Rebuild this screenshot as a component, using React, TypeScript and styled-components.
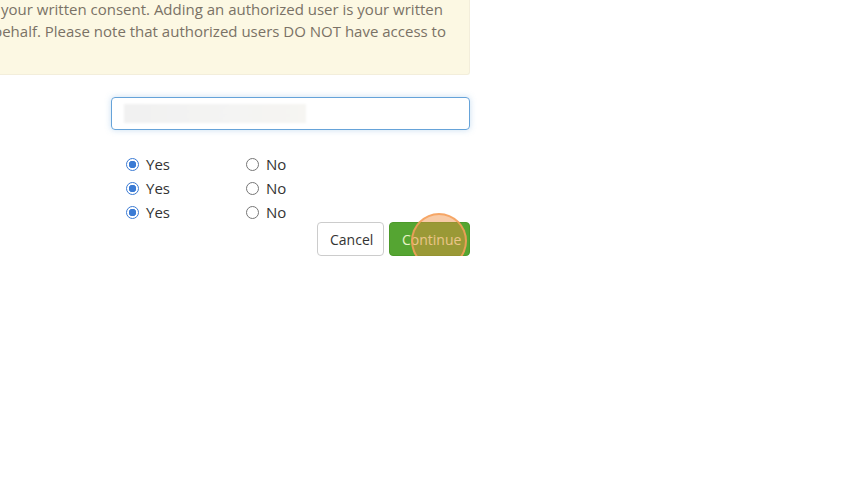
import React from "react";
import styled, { createGlobalStyle } from "styled-components";

const GlobalStyle = createGlobalStyle`
  html, body {
    margin: 0;
    padding: 0;
    background: #ffffff;
  }
  body {
    font-family: "Open Sans", "Noto Sans", Arial, sans-serif;
    color: #333333;
  }
`;

const App = () => {
  const rows = [1, 2, 3];
  return (
    <>
      <GlobalStyle />
      <Page>
        <Notice>
          <Line $indent={1}>your written consent. Adding an authorized user is your written</Line>
          <Line $indent={-7}>behalf. Please note that authorized users DO NOT have access to</Line>
        </Notice>
        <Form>
          <NameInput>
            <Blur />
          </NameInput>
          <Choices>
            {rows.map((r) => (
              <ChoiceRow key={r}>
                <Option>
                  <Radio $checked />
                  Yes
                </Option>
                <Option>
                  <Radio />
                  No
                </Option>
              </ChoiceRow>
            ))}
          </Choices>
          <Actions>
            <Button>Cancel</Button>
            <Button $primary>
              Continue
              <Click />
            </Button>
          </Actions>
        </Form>
      </Page>
    </>
  );
};

export default App;

const Page = styled.div`
  width: 470px;
  display: flex;
  flex-direction: column;
`;

const Notice = styled.div`
  height: 77px;
  margin-top: -2px;
  box-sizing: border-box;
  background-color: #fcf8e3;
  border-right: 1px solid #f3eedb;
  border-bottom: 1px solid #f3eedb;
  border-bottom-right-radius: 3px;
  color: #7a7266;
  font-size: 15px;
  line-height: 22px;
  overflow: hidden;
  white-space: nowrap;
`;

const Line = styled.div<{ $indent: number }>`
  margin-left: ${(p) => p.$indent}px;
`;

const Form = styled.div`
  display: flex;
  flex-direction: column;
  padding-left: 111px;
`;

const NameInput = styled.div`
  margin-top: 22px;
  height: 33px;
  box-sizing: border-box;
  border: 1px solid #66a3d9;
  border-radius: 4px;
  box-shadow: 0 0 6px rgba(102, 163, 217, 0.35);
  padding: 6px 0 0 12px;
`;

const Blur = styled.div`
  width: 182px;
  height: 19px;
  background: linear-gradient(90deg, #f1f1f1, #f4f4f3 60%, #f6f5f2);
  filter: blur(1px);
`;

const Choices = styled.div`
  display: flex;
  flex-direction: column;
  margin-top: 22px;
  padding-left: 15px;
`;

const ChoiceRow = styled.div`
  display: flex;
  height: 24px;
  align-items: center;
`;

const Option = styled.label`
  width: 120px;
  display: flex;
  align-items: center;
  font-size: 15px;
  color: #333333;
`;

const Radio = styled.span<{ $checked?: boolean }>`
  width: 13px;
  height: 13px;
  box-sizing: border-box;
  border-radius: 50%;
  border: 1px solid ${(p) => (p.$checked ? "#3b7bd4" : "#767676")};
  margin-right: 7px;
  background: ${(p) =>
    p.$checked
      ? "radial-gradient(circle, #3b7bd4 0 3.5px, #ffffff 4px)"
      : "#ffffff"};
`;

const Actions = styled.div`
  display: flex;
  justify-content: flex-end;
  gap: 5px;
  margin-top: -2px;
`;

const Button = styled.button<{ $primary?: boolean }>`
  position: relative;
  height: 34px;
  padding: 0 12px;
  border-radius: 4px;
  font-family: "Open Sans", "Noto Sans", Arial, sans-serif;
  font-size: 14px;
  border: 1px solid ${(p) => (p.$primary ? "#4c9a2a" : "#cccccc")};
  background: ${(p) => (p.$primary ? "#55a532" : "#ffffff")};
  color: ${(p) => (p.$primary ? "#e8f3c8" : "#333333")};
  width: ${(p) => (p.$primary ? "81px" : "67px")};
`;

const Click = styled.span`
  position: absolute;
  left: 21px;
  top: -10px;
  width: 52px;
  height: 52px;
  border-radius: 50%;
  border: 2px solid rgba(246, 160, 90, 0.85);
  background: rgba(240, 140, 60, 0.45);
  pointer-events: none;
`;
